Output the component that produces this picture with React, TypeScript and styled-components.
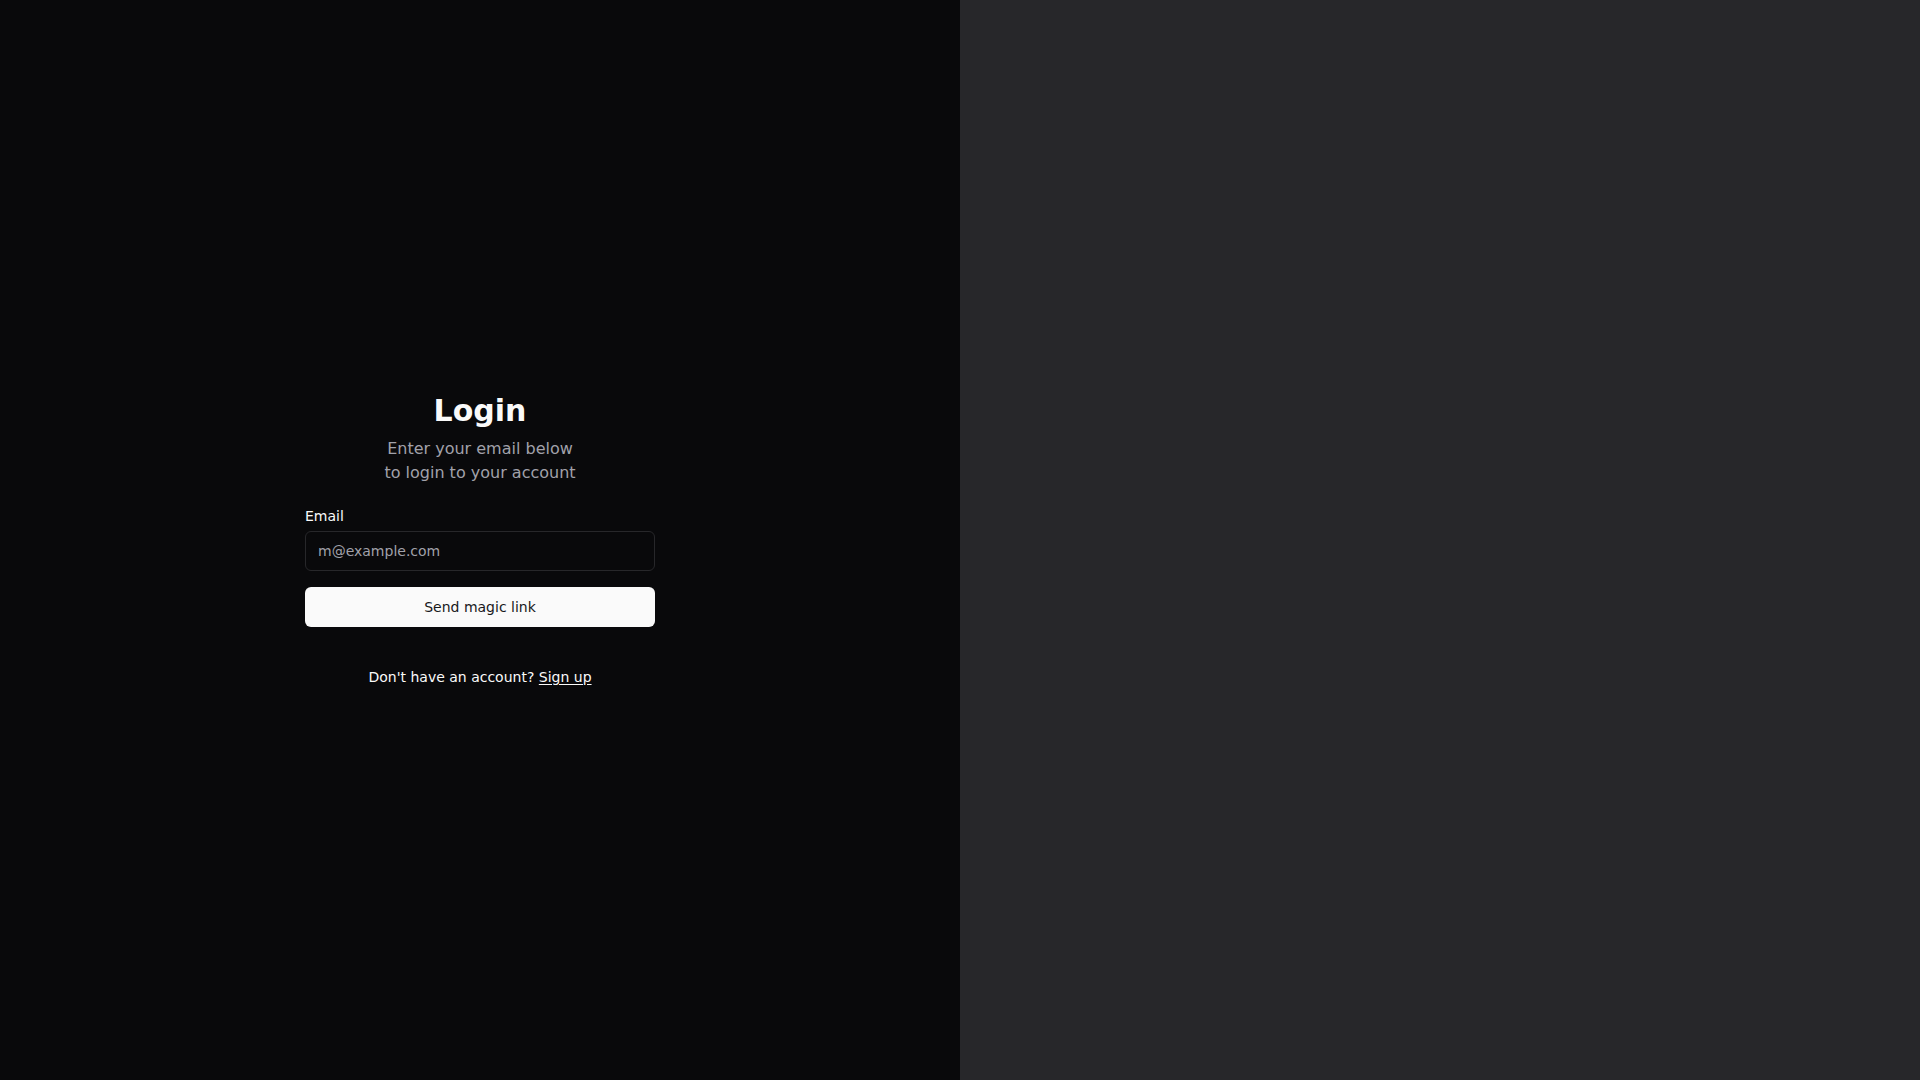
import { FC } from "react";
import styled, { createGlobalStyle } from "styled-components";

const GlobalStyle = createGlobalStyle`
  html, body {
    margin: 0;
    padding: 0;
    height: 100%;
  }

  body {
    font-family: "DejaVu Sans", "Noto Sans", sans-serif;
    background-color: #09090b;
    color: #fafafa;
  }

  #root {
    height: 100%;
  }

  * {
    box-sizing: border-box;
  }
`;

const Page = styled.div`
  height: 100vh;
  width: 100vw;

  display: grid;
  grid-template-columns: 1fr 1fr;
`;

const FormSide = styled.div`
  display: flex;
  align-items: center;
  justify-content: center;

  background-color: #09090b;
`;

const Cover = styled.div`
  background-color: #27272a;
`;

const Form = styled.form`
  width: 350px;

  display: flex;
  flex-direction: column;
`;

const Header = styled.div`
  display: flex;
  flex-direction: column;
  align-items: center;
  gap: 8px;

  text-align: center;
`;

const Title = styled.h1`
  margin: 0;

  font-weight: bold;
  font-size: 30px;
  line-height: 36px;
`;

const Subtitle = styled.p`
  margin: 0;

  font-size: 16px;
  line-height: 24px;

  color: #a1a1aa;
`;

const Field = styled.div`
  margin-top: 24px;

  display: grid;
  gap: 8px;
`;

const Label = styled.label`
  font-size: 14px;
  font-weight: 400;
  line-height: 14px;
`;

const Input = styled.input`
  height: 40px;
  width: 100%;

  padding: 8px 12px;

  border: 1px solid #27272a;
  border-radius: 6px;

  background-color: transparent;
  color: #fafafa;

  font-family: inherit;
  font-size: 14px;

  outline: none;

  &::placeholder {
    color: #a1a1aa;
  }
`;

const Button = styled.button`
  margin-top: 16px;

  height: 40px;
  width: 100%;

  border: none;
  border-radius: 6px;

  background-color: #fafafa;
  color: #18181b;

  font-family: inherit;
  font-size: 14px;
  font-weight: 400;

  cursor: pointer;
`;

const Footer = styled.p`
  margin: 40px 0 0;

  text-align: center;
  font-size: 14px;
  font-weight: 400;
  line-height: 20px;
`;

const Link = styled.a`
  color: #fafafa;
  text-decoration: underline;
  text-underline-offset: 2px;
`;

const App: FC = () => {
  return (
    <>
      <GlobalStyle />
      <Page>
        <FormSide>
          <Form onSubmit={(e) => e.preventDefault()}>
            <Header>
              <Title>Login</Title>
              <Subtitle>
                Enter your email below
                <br />
                to login to your account
              </Subtitle>
            </Header>
            <Field>
              <Label htmlFor="email">Email</Label>
              <Input id="email" type="email" placeholder="m@example.com" />
            </Field>
            <Button type="submit">Send magic link</Button>
            <Footer>
              Don't have an account? <Link href="#">Sign up</Link>
            </Footer>
          </Form>
        </FormSide>
        <Cover />
      </Page>
    </>
  );
};

export default App;
